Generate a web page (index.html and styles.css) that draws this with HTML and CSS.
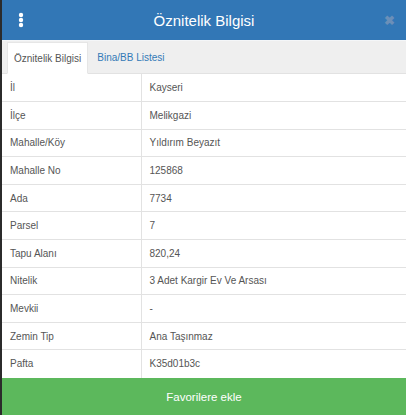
FILE: index.html
```html
<!DOCTYPE html>
<html lang="tr">
<head>
    <meta charset="UTF-8">
    <meta name="viewport" content="width=device-width, initial-scale=1.0">
    <title>Öznitelik Bilgisi</title>
    <link rel="stylesheet" href="styles.css">
</head>
<body>
    <div class="panel">
        <div class="header">
            <div class="menu">
                <svg width="6" height="16" viewBox="0 0 6 16"><circle cx="3" cy="3" r="2.2" fill="#fff"/><circle cx="3" cy="8" r="2.2" fill="#fff"/><circle cx="3" cy="13" r="2.2" fill="#fff"/></svg>
            </div>
            <div class="title">Öznitelik Bilgisi</div>
            <div class="close">&#x2716;</div>
        </div>
        <div class="tabs">
            <div class="tab active">Öznitelik Bilgisi</div>
            <div class="tab">Bina/BB Listesi</div>
        </div>
        <table class="attrs">
            <tr><td>İl</td><td>Kayseri</td></tr>
            <tr><td>İlçe</td><td>Melikgazi</td></tr>
            <tr><td>Mahalle/Köy</td><td>Yıldırım Beyazıt</td></tr>
            <tr><td>Mahalle No</td><td>125868</td></tr>
            <tr><td>Ada</td><td>7734</td></tr>
            <tr><td>Parsel</td><td>7</td></tr>
            <tr><td>Tapu Alanı</td><td>820,24</td></tr>
            <tr><td>Nitelik</td><td>3 Adet Kargir Ev Ve Arsası</td></tr>
            <tr><td>Mevkii</td><td>-</td></tr>
            <tr><td>Zemin Tip</td><td>Ana Taşınmaz</td></tr>
            <tr><td>Pafta</td><td>K35d01b3c</td></tr>
        </table>
        <button class="btn">Favorilere ekle</button>
    </div>
</body>
</html>
```

FILE: styles.css
```css
body {
    margin: 0;
    font-family: "Liberation Sans", Arial, sans-serif;
    background-color: #fff;
    overflow: hidden;
}
.panel {
    width: 404px;
    height: 415px;
    border-left: 2px solid #2b2b2b;
    display: flex;
    flex-direction: column;
}
.header {
    height: 40px;
    background-color: #3277b6;
    display: flex;
    align-items: center;
    border-bottom: 1px solid #f4f6f8;
}
.menu {
    width: 40px;
    padding-left: 16px;
    box-sizing: border-box;
    display: flex;
    align-items: center;
}
.title {
    flex: 1;
    text-align: center;
    color: #fff;
    font-size: 15px;
}
.close {
    width: 40px;
    padding-left: 6px;
    box-sizing: border-box;
    text-align: center;
    color: #6b8fb8;
    font-size: 13px;
    font-weight: bold;
}
.tabs {
    height: 33px;
    background-color: #efefef;
    display: flex;
    align-items: flex-end;
    padding-left: 5px;
    border-bottom: 1px solid #e2e2e2;
    box-sizing: border-box;
}
.tab {
    height: 31px;
    line-height: 31px;
    padding: 0 9px;
    font-size: 10px;
    color: #337ab7;
    box-sizing: border-box;
}
.tab.active {
    background-color: #fff;
    color: #555;
    border: 1px solid #e6e6e6;
    border-bottom-color: #fff;
    height: 32px;
    margin-bottom: -1px;
    padding: 0 6px;
}
.attrs {
    width: 100%;
    border-collapse: collapse;
    font-size: 10px;
    color: #555;
}
.attrs td {
    height: 27.6px;
    padding: 0 6px 0 8px;
    border-bottom: 1px solid #e2e2e2;
    box-sizing: border-box;
}
.attrs td:first-child {
    width: 139px;
    border-right: 1px solid #e2e2e2;
}
.attrs tr:last-child td {
    border-bottom: none;
}
.btn {
    margin-top: auto;
    height: 37px;
    width: 100%;
    border: none;
    background-color: #5cb85c;
    color: #fff;
    font-family: "Liberation Sans", Arial, sans-serif;
    font-size: 11.5px;
}
```
